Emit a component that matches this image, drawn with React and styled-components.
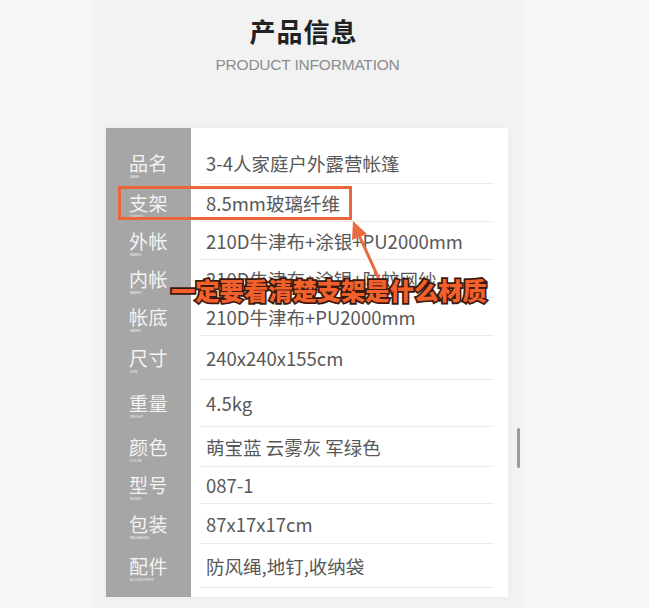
import React from "react";
import styled, { createGlobalStyle } from "styled-components";

const GlobalStyle = createGlobalStyle`
  html, body {
    margin: 0;
    padding: 0;
    background: #f6f6f6;
  }
  body {
    font-family: "Noto Sans CJK SC", "Noto Sans", sans-serif;
  }
`;

const Page = styled.div`
  position: relative;
  width: 649px;
  height: 608px;
  overflow: hidden;
  padding-left: 92px;
  box-sizing: border-box;
`;

const Band = styled.div`
  width: 431px;
  height: 608px;
  background: #f2f2f2;
  padding-top: 15px;
  box-sizing: border-box;
`;

const Title = styled.h1`
  margin: 0;
  text-align: center;
  font-size: 26px;
  line-height: 32px;
  font-weight: 700;
  color: #222;
  letter-spacing: 1px;
  padding-right: 8px;
`;

const Subtitle = styled.div`
  margin-top: 9px;
  text-align: center;
  font-family: "Liberation Sans", Arial, sans-serif;
  font-size: 15.5px;
  line-height: 18px;
  color: #8c8c8c;
  letter-spacing: -0.2px;
`;

const Table = styled.div`
  margin: 54px 0 0 14px;
  width: 402px;
  display: grid;
  grid-template-columns: 85px 1fr;
  background: #fff;
  box-shadow: 0 0 6px rgba(0, 0, 0, 0.04);
`;

const LabelCol = styled.div`
  background: #a6a6a6;
  padding: 15px 0 9px;
  display: flex;
  flex-direction: column;
`;

const ValueCol = styled.div`
  padding: 15px 14px 9px 9px;
  display: flex;
  flex-direction: column;
`;

const LabelCell = styled.div`
  height: ${(p) => p.$h}px;
  display: flex;
  align-items: center;
  justify-content: center;
  padding-top: 4px;
  box-sizing: border-box;
`;

const LabelBlock = styled.div`
  display: flex;
  flex-direction: column;
  align-items: flex-start;
`;

const LabelText = styled.span`
  font-size: 19px;
  line-height: 21px;
  color: #f3f3f3;
  letter-spacing: 0.5px;
`;

const LabelSub = styled.span`
  font-family: "Liberation Sans", Arial, sans-serif;
  font-size: 3px;
  line-height: 4px;
  margin-top: 2px;
  margin-left: 1px;
  color: #f3f3f3;
  letter-spacing: 0.2px;
`;

const ValueCell = styled.div`
  height: ${(p) => p.$h}px;
  display: flex;
  align-items: center;
  padding-left: 6px;
  box-sizing: border-box;
  border-bottom: 1px solid #ececec;
  font-size: 18.5px;
  color: #585858;
  white-space: nowrap;
`;

const HighlightBox = styled.div`
  position: absolute;
  left: 118px;
  top: 186px;
  width: 234px;
  height: 34px;
  border: 3px solid #e9653c;
  box-sizing: border-box;
`;

const ArrowLayer = styled.svg`
  position: absolute;
  left: 0;
  top: 0;
`;

const Caption = styled.div`
  position: absolute;
  left: 171px;
  top: 275px;
  font-size: 24.3px;
  line-height: 30px;
  font-weight: 900;
  color: #f2602c;
  -webkit-text-stroke: 3.5px #3a1a10;
  paint-order: stroke fill;
  white-space: nowrap;
`;

const ScrollThumb = styled.div`
  position: absolute;
  left: 517px;
  top: 428px;
  width: 3px;
  height: 40px;
  border-radius: 2px;
  background: #9c9c9c;
`;

const rows = [
  { label: "品名", en: "NAME", value: "3-4人家庭户外露营帐篷", h: 41 },
  { label: "支架", en: "STENTS", value: "8.5mm玻璃纤维", h: 38 },
  { label: "外帐", en: "FABRIC", value: "210D牛津布+涂银+PU2000mm", h: 38 },
  { label: "内帐", en: "FABRIC", value: "210D牛津布+涂银+防蚊网纱", h: 38 },
  { label: "帐底", en: "FABRIC", value: "210D牛津布+PU2000mm", h: 38 },
  { label: "尺寸", en: "SIZE", value: "240x240x155cm", h: 44 },
  { label: "重量", en: "WEIGHT", value: "4.5kg", h: 47 },
  { label: "颜色", en: "COLOR", value: "萌宝蓝 云雾灰 军绿色", h: 40 },
  { label: "型号", en: "MODEL", value: "087-1", h: 37 },
  { label: "包装", en: "PACKAGING", value: "87x17x17cm", h: 40 },
  { label: "配件", en: "ACCESSORIES", value: "防风绳,地钉,收纳袋", h: 44 },
];

export default function App() {
  return (
    <>
      <GlobalStyle />
      <Page>
        <Band>
          <Title>产品信息</Title>
          <Subtitle>PRODUCT INFORMATION</Subtitle>
          <Table>
            <LabelCol>
              {rows.map((r) => (
                <LabelCell key={r.label} $h={r.h}>
                  <LabelBlock>
                    <LabelText>{r.label}</LabelText>
                    <LabelSub>{r.en}</LabelSub>
                  </LabelBlock>
                </LabelCell>
              ))}
            </LabelCol>
            <ValueCol>
              {rows.map((r) => (
                <ValueCell key={r.label} $h={r.h}>
                  {r.value}
                </ValueCell>
              ))}
            </ValueCol>
          </Table>
        </Band>

        <HighlightBox />
        <ArrowLayer width="649" height="608" viewBox="0 0 649 608">
          <line x1="383" y1="288" x2="358" y2="233" stroke="#ea6a42" strokeWidth="3" strokeLinecap="round" />
          <polygon points="353,221 367,234 352,240" fill="#ea6a42" />
        </ArrowLayer>
        <Caption>一定要看清楚支架是什么材质</Caption>
        <ScrollThumb />
      </Page>
    </>
  );
}
